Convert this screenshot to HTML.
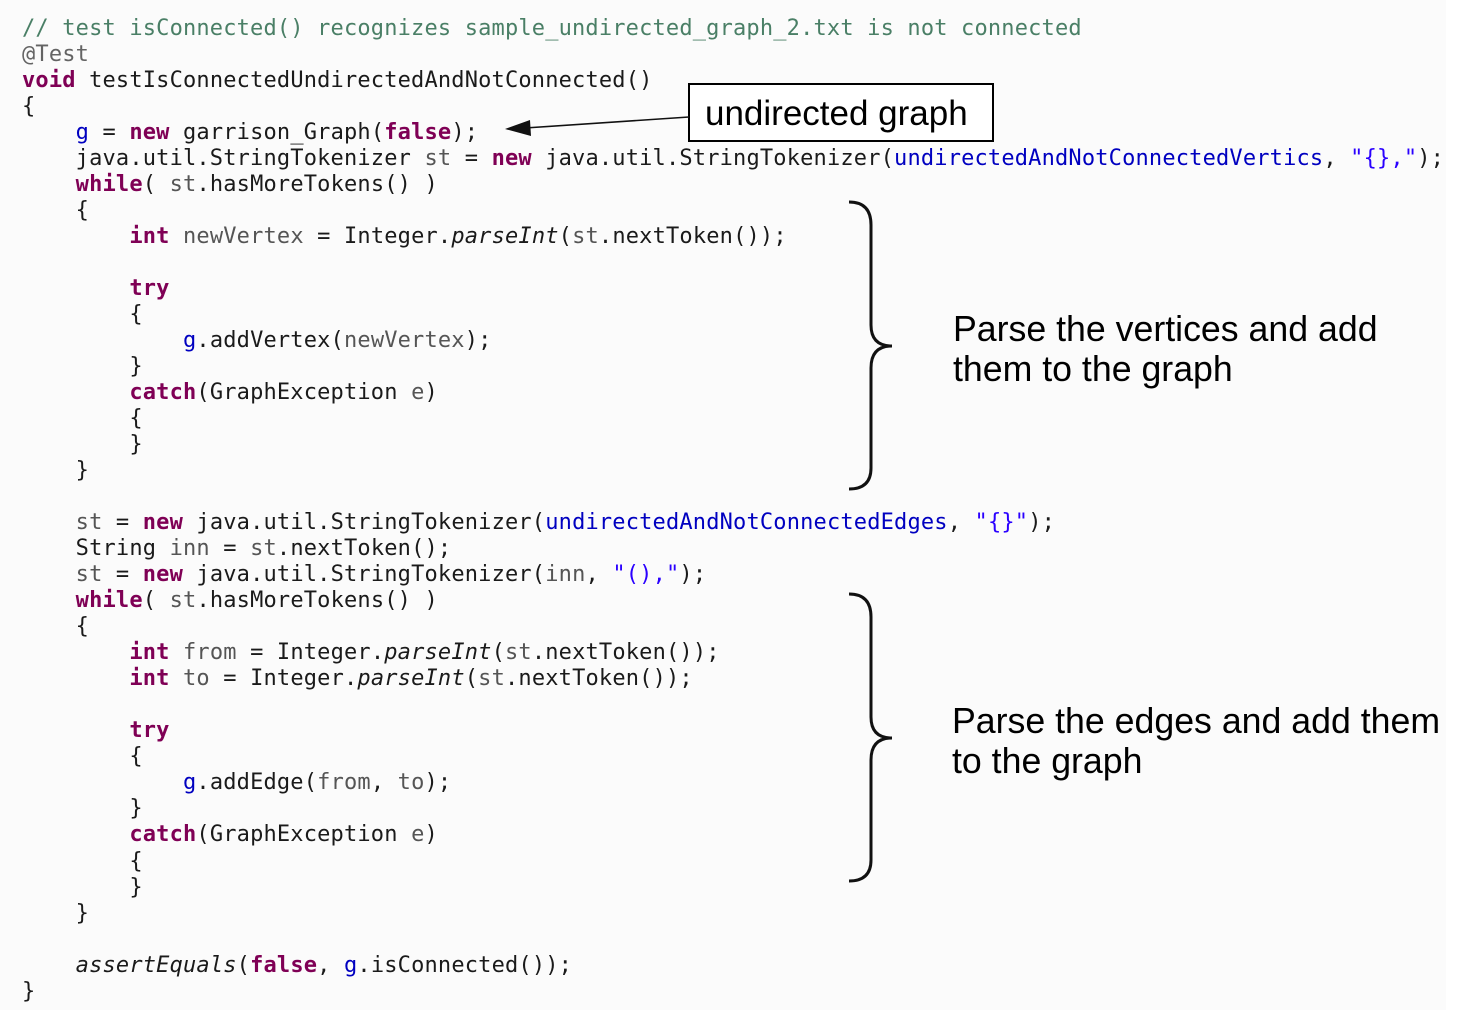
<!DOCTYPE html>
<html><head><meta charset="utf-8"><style>
body{margin:0;background:#fff;width:1464px;height:1010px;overflow:hidden;position:relative}
#code{position:absolute;left:0;top:0;width:1446px;height:1010px;background:#fbfbfb}
pre{position:absolute;left:22px;top:16px;margin:0;font-family:"DejaVu Sans Mono","Liberation Mono",monospace;font-size:22px;line-height:26.02px;color:#1a1a1a;letter-spacing:0.17px}
.c{color:#4a7f66}.k{color:#7f0055;font-weight:bold}.f{color:#0000c0}.s{color:#2a00ff}.a{color:#646464}.l{color:#555}
.t{position:absolute;font-family:"Liberation Sans",Arial,sans-serif;font-size:35.7px;line-height:40px;color:#000}
</style></head><body>
<div id="code"></div>
<pre><span class="c">// test isConnected() recognizes sample_undirected_graph_2.txt is not connected</span>
<span class="a">@Test</span>
<span class="k">void</span> testIsConnectedUndirectedAndNotConnected()
{
    <span class="f">g</span> = <span class="k">new</span> garrison_Graph(<span class="k">false</span>);
    java.util.StringTokenizer <span class="l">st</span> = <span class="k">new</span> java.util.StringTokenizer(<span class="f">undirectedAndNotConnectedVertics</span>, <span class="s">"{},"</span>);
    <span class="k">while</span>( <span class="l">st</span>.hasMoreTokens() )
    {
        <span class="k">int</span> <span class="l">newVertex</span> = Integer.<i>parseInt</i>(<span class="l">st</span>.nextToken());

        <span class="k">try</span>
        {
            <span class="f">g</span>.addVertex(<span class="l">newVertex</span>);
        }
        <span class="k">catch</span>(GraphException <span class="l">e</span>)
        {
        }
    }

    <span class="l">st</span> = <span class="k">new</span> java.util.StringTokenizer(<span class="f">undirectedAndNotConnectedEdges</span>, <span class="s">"{}"</span>);
    String <span class="l">inn</span> = <span class="l">st</span>.nextToken();
    <span class="l">st</span> = <span class="k">new</span> java.util.StringTokenizer(<span class="l">inn</span>, <span class="s">"(),"</span>);
    <span class="k">while</span>( <span class="l">st</span>.hasMoreTokens() )
    {
        <span class="k">int</span> <span class="l">from</span> = Integer.<i>parseInt</i>(<span class="l">st</span>.nextToken());
        <span class="k">int</span> <span class="l">to</span> = Integer.<i>parseInt</i>(<span class="l">st</span>.nextToken());

        <span class="k">try</span>
        {
            <span class="f">g</span>.addEdge(<span class="l">from</span>, <span class="l">to</span>);
        }
        <span class="k">catch</span>(GraphException <span class="l">e</span>)
        {
        }
    }

    <i>assertEquals</i>(<span class="k">false</span>, <span class="f">g</span>.isConnected());
}</pre>
<div style="position:absolute;left:688px;top:83px;width:302px;height:55px;border:2px solid #000;background:#fff"></div>
<div class="t" style="left:705px;top:94px;font-size:35px">undirected graph</div>
<svg width="1464" height="1010" style="position:absolute;left:0;top:0" fill="none" stroke="#111" stroke-width="3">
<line x1="689" y1="117" x2="525" y2="128" stroke-width="1.6"/>
<polygon points="505,129 530,120 531,136" fill="#111" stroke="none"/>
<path d="M849,202 Q871,202 871,225 L871,325 Q871,346 892,346 Q871,346 871,368 L871,468 Q871,489 849,489"/>
<path d="M849,594 Q871,594 871,617 L871,717 Q871,738 892,738 Q871,738 871,760 L871,860 Q871,881 849,881"/>
</svg>
<div class="t" style="left:953px;top:309px">Parse the vertices and add<br>them to the graph</div>
<div class="t" style="left:952px;top:701px">Parse the edges and add them<br>to the graph</div>
</body></html>
